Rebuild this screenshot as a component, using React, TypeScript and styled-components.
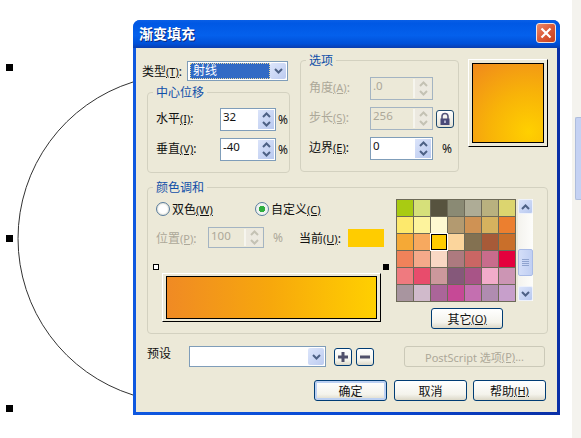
import React from "react";
import styled, { createGlobalStyle } from "styled-components";

const Global = createGlobalStyle`
  html, body { margin: 0; padding: 0; background: #fff; }
  body { font-family: "Noto Sans", "Noto Sans CJK SC", sans-serif; font-size: 12px; color: #111; }
`;

const Canvas = styled.div`
  position: relative;
  width: 581px;
  height: 438px;
  overflow: hidden;
  background: #fff;
`;
const Drawing = styled.svg`
  position: absolute;
  left: 0;
  top: 0;
`;
const Handle = styled.div<{ $top: number }>`
  position: absolute;
  left: 6px;
  top: ${(p) => p.$top}px;
  width: 7px;
  height: 7px;
  background: #000;
`;
const SideStrip = styled.div`
  position: absolute;
  left: 572px;
  top: 0;
  width: 9px;
  height: 438px;
  background: #f4f3ee;
`;
const SideThumb = styled.div`
  position: absolute;
  left: 3px;
  top: 117px;
  width: 6px;
  height: 83px;
  box-sizing: border-box;
  background: #c5d2f3;
  border: 1px solid #aebddc;
  border-right: 0;
  border-radius: 2px 0 0 2px;
`;
const Window = styled.div`
  position: absolute;
  left: 133px;
  top: 20px;
  width: 427px;
  height: 395px;
  display: flex;
  flex-direction: column;
  border-radius: 7px 7px 0 0;
  overflow: hidden;
  background: linear-gradient(90deg, #0f58e0 0%, #0846d0 60%, #0a2fa6 100%);
`;
const TitleBar = styled.div`
  height: 28px;
  flex: none;
  display: flex;
  align-items: center;
  justify-content: space-between;
  padding: 0 4px 2px 6px;
  box-sizing: border-box;
  background: linear-gradient(180deg, #0a5fe6 0%, #0058e4 12%, #0460ec 55%, #0050d8 85%, #0a3dae 100%);
`;
const Title = styled.div`
  font-family: "Noto Sans CJK SC", sans-serif;
  font-size: 14px;
  line-height: 16px;
  font-weight: 700;
  color: #fff;
  text-shadow: 1px 1px 0 #0a2a80;
`;
const CloseButton = styled.div`
  width: 20px;
  height: 20px;
  box-sizing: border-box;
  border: 1px solid #f3e3dc;
  border-radius: 3px;
  background: linear-gradient(135deg, #e98a6c 0%, #dc5a38 50%, #c8401c 100%);
  display: flex;
  align-items: center;
  justify-content: center;
`;
const Client = styled.div`
  flex: 1;
  margin: 0 3px 3px;
  padding: 11px 9px 0 11px;
  background: #ece9d8;
  display: flex;
  flex-direction: column;
`;
const TopSection = styled.div`
  display: flex;
  height: 114px;
`;
const LeftColumn = styled.div`
  width: 143px;
  margin-right: 10px;
  flex: none;
  display: flex;
  flex-direction: column;
`;
const TypeRow = styled.div`
  display: flex;
  align-items: center;
  height: 20px;
  margin: 2px 0 0 -5px;
`;
const TypeLabel = styled.span`
  width: 45px;
  flex: none;
  white-space: nowrap;
`;
const Combo = styled.div`
  box-sizing: border-box;
  background: #fff;
  border: 1px solid #7f9db9;
  display: flex;
  align-items: center;
  justify-content: space-between;
  padding: 1px;
`;
const TypeCombo = styled(Combo)`
  width: 101px;
  height: 20px;
`;
const Selected = styled.div`
  width: 81px;
  height: 16px;
  margin-left: 1px;
  box-sizing: border-box;
  border: 1px dotted #e8d8a0;
  background: #316ac5;
  color: #fff;
  line-height: 14px;
  padding-left: 2px;
`;
const ComboArrow = styled.div`
  width: 16px;
  height: 100%;
  flex: none;
  border-radius: 2px;
  background: linear-gradient(135deg, #dde6fb 0%, #bccbf0 100%);
  display: flex;
  align-items: center;
  justify-content: center;
`;
const Group = styled.div<{ $w: number; $h: number; $mt?: number }>`
  position: relative;
  box-sizing: border-box;
  flex: none;
  width: ${(p) => p.$w}px;
  height: ${(p) => p.$h}px;
  margin-top: ${(p) => p.$mt ?? 0}px;
  border: 1px solid #d3d1c0;
  border-radius: 4px;
`;
const CenterGroup = styled(Group)`
  padding: 15px 0 0 8px;
  display: flex;
  flex-direction: column;
  gap: 7px;
`;
const OptionsGroup = styled(Group)`
  padding: 16px 0 0 8px;
  display: flex;
  flex-direction: column;
  gap: 7px;
`;
const Legend = styled.div`
  position: absolute;
  left: 5px;
  top: -8px;
  padding: 0 3px;
  background: #ece9d8;
  color: #0f4fa8;
  font-size: 12px;
  line-height: 15px;
`;
const FieldRow = styled.div`
  display: flex;
  align-items: center;
  height: 23px;
`;
const FieldLabel = styled.span<{ $w: number; $off?: boolean }>`
  width: ${(p) => p.$w}px;
  flex: none;
  white-space: nowrap;
  color: ${(p) => (p.$off ? "#aca899" : "#111")};
`;
const RowLabel = styled(FieldLabel)`
  margin-bottom: 3px;
`;
const Mn = styled.span`
  text-decoration: underline;
  font-size: 11px;
`;
const Unit = styled.span<{ $ml: number; $off?: boolean }>`
  margin-left: ${(p) => p.$ml}px;
  font-size: 12px;
  color: ${(p) => (p.$off ? "#aca899" : "#111")};
`;
const SpinBox = styled.div<{ $w: number; $off?: boolean }>`
  box-sizing: border-box;
  flex: none;
  width: ${(p) => p.$w}px;
  height: 23px;
  border: 1px solid ${(p) => (p.$off ? "#a4b4c2" : "#7f9db9")};
  background: ${(p) => (p.$off ? "#ece9d8" : "#fff")};
  display: flex;
  justify-content: space-between;
  padding: 1px;
`;
const SpinValue = styled.span<{ $off?: boolean }>`
  padding-left: 1px;
  font-size: 11.5px;
  line-height: 13px;
  color: ${(p) => (p.$off ? "#aca899" : "#111")};
`;
const SpinButtons = styled.div<{ $off?: boolean }>`
  width: 16px;
  flex: none;
  border-left: ${(p) => (p.$off ? "2px solid #f6f5ee" : "0")};
  background: ${(p) =>
    p.$off ? "#ece9e0" : "linear-gradient(135deg, #dbe4fa 0%, #b9c9ef 100%)"};
  display: flex;
  flex-direction: column;
  align-items: center;
  justify-content: center;
  gap: 3px;
`;
const LockButton = styled.div`
  width: 18px;
  height: 18px;
  margin-left: 3px;
  box-sizing: border-box;
  border: 1px solid #1f4a6e;
  border-radius: 3px;
  background: linear-gradient(180deg, #ffffff, #e4e2d6);
  display: flex;
  align-items: center;
  justify-content: center;
`;
const Preview = styled.div`
  box-sizing: border-box;
  width: 80px;
  height: 88px;
  margin-left: 9px;
  flex: none;
  padding: 3px 3px 3px 3px;
  border-top: 1px solid #fff;
  border-left: 1px solid #fff;
  border-right: 1px solid #000;
  border-bottom: 1px solid #000;
`;
const PreviewFill = styled.div`
  box-sizing: border-box;
  height: 100%;
  border: 1px solid #000;
  background: radial-gradient(circle at 80% 87%, #ffd000 0%, #f8b308 45%, #f0891c 100%);
`;
const ColorGroup = styled(Group)`
  display: flex;
`;
const ColorLeft = styled.div`
  width: 240px;
  margin-left: 8px;
  flex: none;
  display: flex;
  flex-direction: column;
`;
const RadioRow = styled.div`
  display: flex;
  align-items: center;
  height: 16px;
  margin-top: 13px;
`;
const RadioItem = styled.label<{ $w: number }>`
  display: flex;
  align-items: center;
  gap: 2px;
  width: ${(p) => p.$w}px;
  flex: none;
`;
const RadioDot = styled.span<{ $on?: boolean }>`
  box-sizing: border-box;
  width: 14px;
  height: 14px;
  border: 1px solid #5a7d9e;
  border-radius: 50%;
  background: radial-gradient(circle, ${(p) =>
      p.$on ? "#2fae3f 0, #2fae3f 3px, #eef2f0 3.5px" : "#fff 0, #fff 4px, #e3e3da 6px"});
`;
const PositionRow = styled.div`
  display: flex;
  align-items: center;
  height: 21px;
  margin-top: 10px;
`;
const PosSpin = styled(SpinBox)`
  height: 21px;
`;
const CurrentLabel = styled.span`
  margin-left: 16px;
  width: 49px;
  flex: none;
  white-space: nowrap;
`;
const Swatch = styled.div`
  width: 36px;
  height: 18px;
  flex: none;
  background: #ffcc00;
`;
const HandleRow = styled.div`
  display: flex;
  justify-content: space-between;
  width: 236px;
  margin: 16px 0 0 -3px;
`;
const Node = styled.div<{ $filled?: boolean }>`
  box-sizing: border-box;
  width: 6px;
  height: 6px;
  border: 1px solid #000;
  background: ${(p) => (p.$filled ? "#000" : "#fff")};
`;
const Bar = styled.div`
  box-sizing: border-box;
  width: 219px;
  height: 49px;
  margin: 3px 0 0 6px;
  padding: 2px 3px;
  border-top: 1px solid #fff;
  border-left: 1px solid #fff;
  border-right: 1px solid #000;
  border-bottom: 1px solid #000;
`;
const BarFill = styled.div`
  box-sizing: border-box;
  height: 100%;
  border: 1px solid #000;
  background: linear-gradient(90deg, #f08a24 0%, #f7a80c 50%, #ffd000 100%);
`;
const ColorRight = styled.div`
  margin-left: 0;
  padding-top: 11px;
  display: flex;
  flex-direction: column;
`;
const PaletteRow = styled.div`
  display: flex;
  gap: 2px;
`;
const Palette = styled.div`
  display: grid;
  grid-template-columns: repeat(7, 16px);
  grid-auto-rows: 16px;
  gap: 1px;
  padding: 1px;
  background: #6d6a58;
`;
const Cell = styled.div<{ $c: string; $sel?: boolean }>`
  box-sizing: border-box;
  background: ${(p) => p.$c};
  ${(p) =>
    p.$sel ? "border: 1px solid #000; outline: 1px solid #fff; outline-offset: 0;" : ""}
`;
const ScrollBar = styled.div`
  width: 15px;
  height: 102px;
  flex: none;
  display: flex;
  flex-direction: column;
  justify-content: space-between;
  background: linear-gradient(90deg, #f4f3ee, #fdfdfb);
  position: relative;
`;
const ScrollButton = styled.div`
  box-sizing: border-box;
  height: 15px;
  border: 1px solid #eef2fb;
  border-radius: 2px;
  background: linear-gradient(135deg, #dbe4fa, #b7c8ef);
  display: flex;
  align-items: center;
  justify-content: center;
`;
const ScrollThumb = styled.div`
  position: absolute;
  left: 0;
  top: 50px;
  width: 15px;
  height: 27px;
  box-sizing: border-box;
  border: 1px solid #a9bbe6;
  border-radius: 2px;
  background: linear-gradient(90deg, #d4def8, #c0cff3);
  display: flex;
  flex-direction: column;
  align-items: center;
  justify-content: center;
  gap: 1px;
`;
const Grip = styled.span`
  width: 7px;
  height: 1px;
  background: #8fa3cf;
`;
const Button = styled.div<{ $w: number; $off?: boolean; $def?: boolean }>`
  box-sizing: border-box;
  width: ${(p) => p.$w}px;
  height: 21px;
  flex: none;
  display: flex;
  align-items: center;
  justify-content: center;
  border-radius: 3px;
  white-space: nowrap;
  border: 1px solid ${(p) => (p.$off ? "#cbc9b8" : "#003c74")};
  color: ${(p) => (p.$off ? "#aca899" : "#111")};
  background: ${(p) =>
    p.$off ? "#ece9d8" : "linear-gradient(180deg, #ffffff 0%, #f4f3ec 70%, #dcd8c8 100%)"};
  box-shadow: ${(p) => (p.$def ? "inset 0 0 0 2px #bcd0f2" : "none")};
`;
const OtherButton = styled(Button)`
  margin: 6px 0 0 35px;
`;
const PresetRow = styled.div`
  display: flex;
  align-items: center;
  height: 21px;
  margin-top: 12px;
`;
const PresetLabel = styled.span`
  width: 42px;
  flex: none;
  font-size: 12px;
  margin-bottom: 7px;
`;
const PresetCombo = styled(Combo)`
  width: 137px;
  height: 21px;
  justify-content: flex-end;
`;
const IconButton = styled(Button)`
  height: 18px;
  border-width: 1px;
`;
const PlusButton = styled(IconButton)`
  margin-left: 8px;
`;
const MinusButton = styled(IconButton)`
  margin-left: 4px;
`;
const ScriptButton = styled(Button)`
  margin-left: 30px;
  font-size: 11px;
`;
const ActionRow = styled.div`
  display: flex;
  justify-content: flex-end;
  gap: 6px;
  margin: 13px 2px 0 0;
`;
const DefaultButton = styled(Button)`
  margin-right: 1px;
`;

const Down = ({ c = "#4d6185" }: { c?: string }) => (
  <svg width="9" height="6" viewBox="0 0 9 6">
    <path d="M1 1l3.5 3.5L8 1" fill="none" stroke={c} strokeWidth="2" />
  </svg>
);
const Up = ({ c = "#4d6185" }: { c?: string }) => (
  <svg width="9" height="6" viewBox="0 0 9 6">
    <path d="M1 5l3.5-3.5L8 5" fill="none" stroke={c} strokeWidth="2" />
  </svg>
);

const Spin = ({
  value,
  w,
  off,
  As = SpinBox,
}: {
  value: string;
  w: number;
  off?: boolean;
  As?: typeof SpinBox;
}) => {
  const c = off ? "#c4c2b4" : "#4d6185";
  return (
    <As $w={w} $off={off}>
      <SpinValue $off={off}>{value}</SpinValue>
      <SpinButtons $off={off}>
        <Up c={c} />
        <Down c={c} />
      </SpinButtons>
    </As>
  );
};

const palette = [
  ["#a9cb12", "#d6e07a", "#57533f", "#8a8a74", "#aeac96", "#b9b17f", "#dcd56f"],
  ["#fde96c", "#fdf39d", "#fef9d1", "#b39a70", "#cf9254", "#d6b25e", "#ec7f2f"],
  ["#f5a936", "#f7a95f", "#ffcc00", "#fbd59c", "#837151", "#a75a38", "#c96f2a"],
  ["#f0825a", "#f5a98a", "#f9d8c4", "#ad7a7f", "#ca6664", "#c86c8c", "#e4003d"],
  ["#ef7a7f", "#e84c6c", "#cc989c", "#85587a", "#a85487", "#f2acca", "#cc95b4"],
  ["#a8959f", "#d0bacb", "#ab6599", "#c64996", "#c46fb0", "#b08cb0", "#c79fcb"],
];

export default function App() {
  return (
    <Canvas>
      <Global />
      <Drawing width="581" height="438" viewBox="0 0 581 438">
        <path d="M133 82A164 164 0 0 0 133 395" fill="none" stroke="#333" strokeWidth="1" />
      </Drawing>
      <Handle $top={64} />
      <Handle $top={235} />
      <Handle $top={405} />
      <SideStrip>
        <SideThumb />
      </SideStrip>
      <Window>
        <TitleBar>
          <Title>渐变填充</Title>
          <CloseButton>
            <svg width="12" height="12" viewBox="0 0 12 12">
              <path d="M1.5 1.5l9 9M10.5 1.5l-9 9" stroke="#fff" strokeWidth="2.2" />
            </svg>
          </CloseButton>
        </TitleBar>
        <Client>
          <TopSection>
            <LeftColumn>
              <TypeRow>
                <TypeLabel>
                  类型<Mn>(T)</Mn>:
                </TypeLabel>
                <TypeCombo>
                  <Selected>射线</Selected>
                  <ComboArrow>
                    <Down />
                  </ComboArrow>
                </TypeCombo>
              </TypeRow>
              <CenterGroup $w={143} $h={81} $mt={11}>
                <Legend>中心位移</Legend>
                <FieldRow>
                  <RowLabel $w={64}>
                    水平<Mn>(I)</Mn>:
                  </RowLabel>
                  <Spin value="32" w={56} />
                  <Unit $ml={2}>%</Unit>
                </FieldRow>
                <FieldRow>
                  <RowLabel $w={64}>
                    垂直<Mn>(V)</Mn>:
                  </RowLabel>
                  <Spin value="-40" w={56} />
                  <Unit $ml={2}>%</Unit>
                </FieldRow>
              </CenterGroup>
            </LeftColumn>
            <OptionsGroup $w={159} $h={112} $mt={1}>
              <Legend>选项</Legend>
              <FieldRow>
                <RowLabel $w={61} $off>
                  角度<Mn>(A)</Mn>:
                </RowLabel>
                <Spin value=".0" w={63} off />
              </FieldRow>
              <FieldRow>
                <RowLabel $w={61} $off>
                  步长<Mn>(S)</Mn>:
                </RowLabel>
                <Spin value="256" w={63} off />
                <LockButton>
                  <svg width="12" height="14" viewBox="0 0 12 14">
                    <path d="M3 7V4.5a3 3 0 0 1 6 0V7" fill="none" stroke="#55557a" strokeWidth="1.6" />
                    <rect x="1.5" y="6.5" width="9" height="6.5" fill="#4a4a78" />
                    <rect x="5.2" y="8.5" width="1.6" height="2.5" fill="#c9c9e0" />
                  </svg>
                </LockButton>
              </FieldRow>
              <FieldRow>
                <RowLabel $w={61}>
                  边界<Mn>(E)</Mn>:
                </RowLabel>
                <Spin value="0" w={63} />
                <Unit $ml={9}>%</Unit>
              </FieldRow>
            </OptionsGroup>
            <Preview>
              <PreviewFill />
            </Preview>
          </TopSection>
          <ColorGroup $w={401} $h={147} $mt={14}>
            <Legend>颜色调和</Legend>
            <ColorLeft>
              <RadioRow>
                <RadioItem $w={99}>
                  <RadioDot />
                  <span>
                    双色<Mn>(W)</Mn>
                  </span>
                </RadioItem>
                <RadioItem $w={100}>
                  <RadioDot $on />
                  <span>
                    自定义<Mn>(C)</Mn>
                  </span>
                </RadioItem>
              </RadioRow>
              <PositionRow>
                <FieldLabel $w={52} $off>
                  位置<Mn>(P)</Mn>:
                </FieldLabel>
                <Spin value="100" w={56} off As={PosSpin} />
                <Unit $ml={9} $off>
                  %
                </Unit>
                <CurrentLabel>
                  当前<Mn>(U)</Mn>:
                </CurrentLabel>
                <Swatch />
              </PositionRow>
              <HandleRow>
                <Node />
                <Node $filled />
              </HandleRow>
              <Bar>
                <BarFill />
              </Bar>
            </ColorLeft>
            <ColorRight>
              <PaletteRow>
                <Palette>
                  {palette.flatMap((row, r) =>
                    row.map((c, i) => <Cell key={`${r}-${i}`} $c={c} $sel={r === 2 && i === 2} />)
                  )}
                </Palette>
                <ScrollBar>
                  <ScrollButton>
                    <Up />
                  </ScrollButton>
                  <ScrollThumb>
                    <Grip />
                    <Grip />
                    <Grip />
                    <Grip />
                  </ScrollThumb>
                  <ScrollButton>
                    <Down />
                  </ScrollButton>
                </ScrollBar>
              </PaletteRow>
              <OtherButton $w={72}>
                其它<Mn>(O)</Mn>
              </OtherButton>
            </ColorRight>
          </ColorGroup>
          <PresetRow>
            <PresetLabel>预设</PresetLabel>
            <PresetCombo>
              <ComboArrow>
                <Down />
              </ComboArrow>
            </PresetCombo>
            <PlusButton $w={18}>
              <svg width="12" height="12" viewBox="0 0 12 12">
                <path d="M6 1v10M1 6h10" stroke="#50506a" strokeWidth="3" />
              </svg>
            </PlusButton>
            <MinusButton $w={18}>
              <svg width="12" height="12" viewBox="0 0 12 12">
                <path d="M1 6h10" stroke="#50506a" strokeWidth="3" />
              </svg>
            </MinusButton>
            <ScriptButton $w={141} $off>
              PostScript 选项<Mn>(P)</Mn>...
            </ScriptButton>
          </PresetRow>
          <ActionRow>
            <DefaultButton $w={73} $def>
              确定
            </DefaultButton>
            <Button $w={73}>取消</Button>
            <Button $w={73}>
              帮助<Mn>(H)</Mn>
            </Button>
          </ActionRow>
        </Client>
      </Window>
    </Canvas>
  );
}
